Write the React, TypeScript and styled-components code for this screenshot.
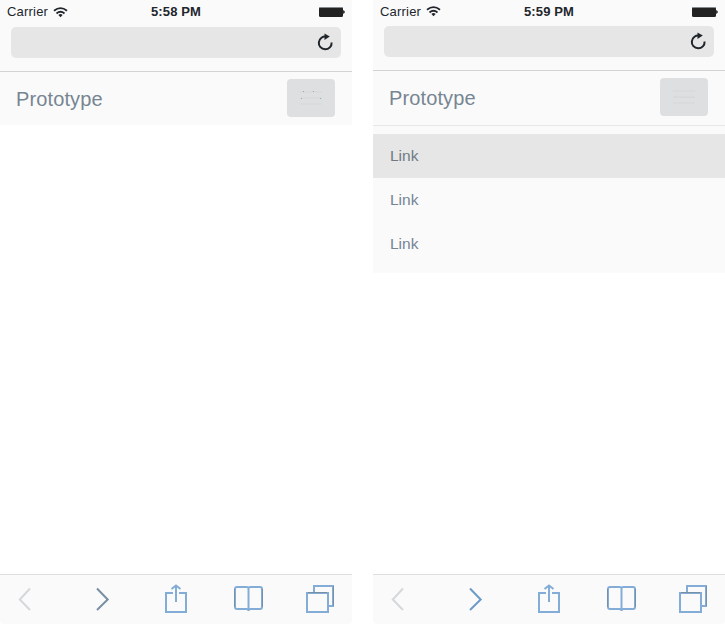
import React from "react";
import styled, { createGlobalStyle } from "styled-components";

const GlobalStyle = createGlobalStyle`
  * { box-sizing: border-box; }
  body { margin: 0; background: #fff; overflow: hidden; }
`;

const Page = styled.main`
  display: flex;
  justify-content: space-between;
  width: 725px;
  height: 624px;
  font-family: "Liberation Sans", Arial, sans-serif;
`;

const Phone = styled.section`
  display: flex;
  flex-direction: column;
  width: 352px;
  height: 624px;
`;

const Browser = styled.header<{ $height: number }>`
  height: ${(p) => p.$height}px;
  background: #fafafa;
  border-bottom: 1px solid #d3d3d3;
`;

const Status = styled.div<{ $height: number }>`
  display: grid;
  grid-template-columns: 1fr auto 1fr;
  align-items: center;
  height: ${(p) => p.$height}px;
  padding: 0 6px 0 7px;
  color: #22262c;
`;

const Carrier = styled.div`
  display: flex;
  align-items: center;
  gap: 5px;
  font-size: 13px;
  line-height: 22px;
  letter-spacing: 0.2px;
`;

const Clock = styled.time`
  padding-right: 1px;
  font-size: 13px;
  font-weight: 700;
  line-height: 22px;
  letter-spacing: 0.12px;
`;

const Battery = styled.svg`
  justify-self: end;
`;

const Address = styled.div`
  display: flex;
  align-items: center;
  justify-content: flex-end;
  height: 31px;
  margin: 3px 11px 0;
  padding-right: 7px;
  background: #e6e6e6;
  border-radius: 5px;
`;

const NavBar = styled.nav<{ $open: boolean }>`
  display: flex;
  align-items: flex-start;
  justify-content: space-between;
  height: ${(p) => (p.$open ? 55 : 53)}px;
  padding: 7px 17px 0 16px;
  background: #fafafa;
  border-bottom: ${(p) => (p.$open ? "1px solid #e5e7e8" : "none")};
`;

const Brand = styled.div`
  color: #778592;
  font-size: 20px;
  line-height: 41px;
  letter-spacing: 0.12px;
`;

const Toggle = styled.div`
  display: flex;
  align-items: center;
  justify-content: center;
  width: 48px;
  height: 38px;
  background: #dedfe0;
  border-radius: 4px;
`;

const Menu = styled.div`
  height: 147px;
  padding-top: 8px;
  background: #fafafa;
`;

const MenuItem = styled.div<{ $active?: boolean }>`
  height: 44px;
  padding-left: 17px;
  color: ${(p) => (p.$active ? "#707a84" : "#758596")};
  background: ${(p) => (p.$active ? "#e6e6e6" : "transparent")};
  font-size: 15.5px;
  line-height: 44px;
`;

const Toolbar = styled.footer`
  display: grid;
  grid-template-columns: 78px 69px 69px 72px 28px;
  height: 50px;
  margin-top: auto;
  padding: 9px 0 0 18px;
  background: #fafafa;
  border-top: 1px solid #dedede;
  border-radius: 0 0 4px 4px;
`;

const Icon = styled.svg`
  display: block;
  fill: none;
  stroke: #83add7;
  stroke-width: 2;
`;

function WifiIcon() {
  return (
    <svg width="15" height="11" viewBox="0 0 15 11" fill="none" stroke="#22262c" strokeWidth="1.8">
      <path d="M1 3.8Q7.5-1.5 14 3.8" />
      <path d="M3.5 6.5Q7.5 3.1 11.5 6.5" />
      <path d="M5.4 7.9Q7.5 6.2 9.6 7.9L7.5 10.2Z" fill="#22262c" stroke="none" />
    </svg>
  );
}

function ReloadIcon() {
  return (
    <svg width="18" height="20" viewBox="0 0 18 20" fill="none" stroke="#20252a" strokeWidth="2">
      <path d="M10.5 3.7A6.4 6.4 0 1 0 15.6 9.5" />
      <path d="M8.5.5L13.8 3.6L8.5 7Z" fill="#20252a" stroke="none" />
    </svg>
  );
}

interface ScreenProps {
  time: string;
  open?: boolean;
}

function Screen({ time, open = false }: ScreenProps) {
  return (
    <Phone>
      <Browser $height={open ? 71 : 72}>
        <Status $height={open ? 23 : 24}>
          <Carrier>Carrier <WifiIcon /></Carrier>
          <Clock>{time}</Clock>
          <Battery width="28" height="12" viewBox="0 0 28 12">
            <rect x="1" y="1" width="24" height="10" rx="1.5" fill="#222" />
            <path d="M2 1.5H24" stroke="#858c91" />
            <path d="M25 4Q29 6 25 8Z" fill="#343b42" />
          </Battery>
        </Status>
        <Address><ReloadIcon /></Address>
      </Browser>
      <NavBar $open={open}>
        <Brand>Prototype</Brand>
        <Toggle>
          <svg width="30" height="18" viewBox="0 0 30 18" fill="none">
            <path d="M4 3H26M4 9H26M4 15H26" stroke="#d9dbdd" strokeWidth="2" />
            {open ? (
              <path d="M5 9.5H8M12 9.5H26" stroke="#d2d6da" strokeDasharray="2 1" />
            ) : (
              <path d="M7 2.5h1M17 2.5h1M5 9.5h1M24 9.5h1" stroke="#87aeca" />
            )}
          </svg>
        </Toggle>
      </NavBar>
      {open && (
        <Menu>
          <MenuItem $active>Link</MenuItem>
          <MenuItem>Link</MenuItem>
          <MenuItem>Link</MenuItem>
        </Menu>
      )}
      <Toolbar>
        <Icon width="14" height="30" viewBox="0 0 14 30">
          <path d="M12 4.5L1.8 15.5L12 26" stroke="#d5d8da" />
        </Icon>
        <Icon width="14" height="30" viewBox="0 0 14 30">
          <path d="M1 4.5L11.7 15.5L1 26" stroke={open ? "#6c9bc8" : "#788fa5"} />
        </Icon>
        <Icon width="22" height="30" viewBox="0 0 22 30">
          <path d="M8 9H1V28H21V9H14M11 18V2M6.5 5L11 1.5L15.5 5" />
        </Icon>
        <Icon width="29" height="30" viewBox="0 0 29 30">
          <path d="M14.5 4Q14.5 3 12.5 3H3Q1 3 1 5V23Q1 25 3 25H12.5Q14.5 25 14.5 27Q14.5 25 16.5 25H26Q28 25 28 23V5Q28 3 26 3H16.5Q14.5 3 14.5 4V27" />
          <path d="M.5 5V23M28.5 5V23" stroke="#7890a6" strokeWidth="1" />
        </Icon>
        <Icon width="28" height="30" viewBox="0 0 28 30">
          <path d="M1 9H22V28H1ZM8 8V2H27V22H22" />
          <path d="M2 8.5H21M27.5 2V22" stroke="#7890a6" strokeWidth="1" />
        </Icon>
      </Toolbar>
    </Phone>
  );
}

export default function App() {
  return (
    <>
      <GlobalStyle />
      <Page>
        <Screen time="5:58 PM" />
        <Screen time="5:59 PM" open />
      </Page>
    </>
  );
}
